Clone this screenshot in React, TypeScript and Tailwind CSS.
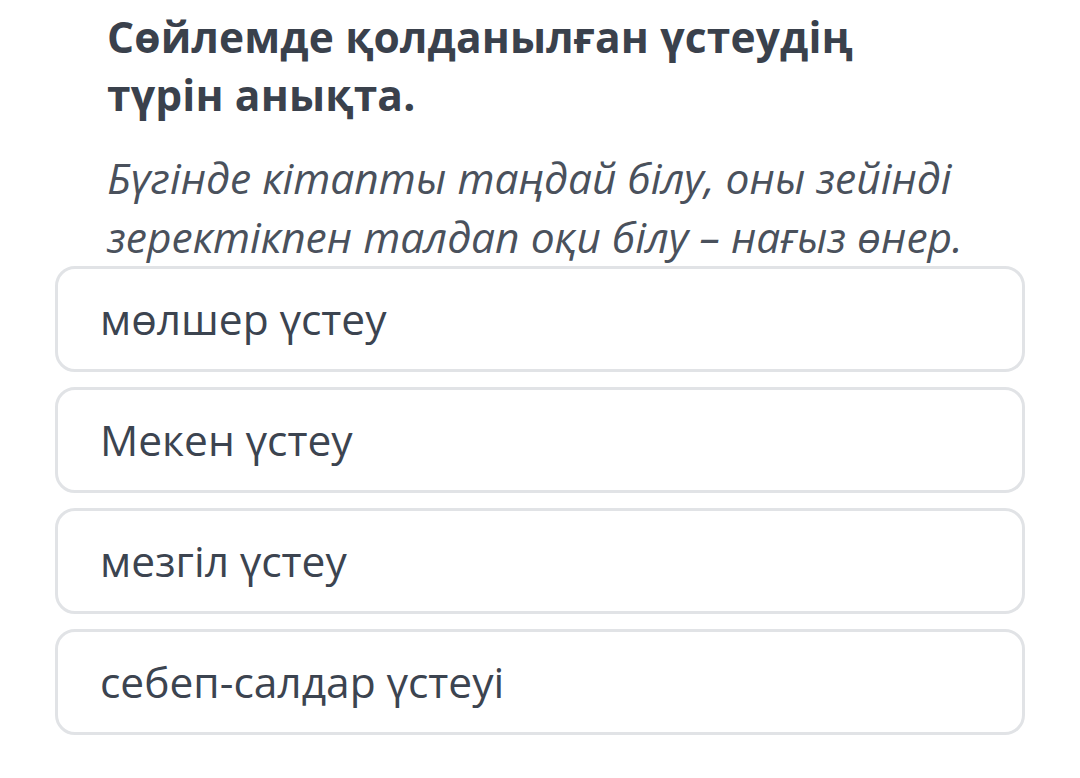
import React from 'react';

const options = ['мөлшер үстеу', 'Мекен үстеу', 'мезгіл үстеу', 'себеп-салдар үстеуі'];

const App = () => {
  return (
    <div className="w-[1080px] h-[778px] bg-white overflow-hidden font-['Open_Sans',sans-serif] text-[#3a414c]">
      <div className="pl-[55px] pr-[55px] pt-[8px]">
        {/* Вопрос */}
        <div className="pl-[52px]">
          <h1 className="text-[42.5px] leading-[58px] font-bold text-[#3a414c] tracking-[0.15px]">
            Сөйлемде қолданылған үстеудің
            <br />
            түрін анықта.
          </h1>
          <p className="mt-[24px] text-[42.5px] leading-[59px] italic text-[#4a515c]">
            Бүгінде кітапты таңдай білу, оны зейінді
            <br />
            зеректікпен талдап оқи білу – нағыз өнер.
          </p>
        </div>

        {/* Варианты */}
        <div className="mt-0 flex flex-col gap-[15px]">
          {options.map((option) => (
            <div
              key={option}
              className="h-[106px] flex items-center px-[42px] border-[3px] border-[#e1e3e6] rounded-[20px] bg-white"
            >
              <span className="text-[42.5px] text-[#3c4450]">{option}</span>
            </div>
          ))}
        </div>
      </div>
    </div>
  );
};

export default App;
